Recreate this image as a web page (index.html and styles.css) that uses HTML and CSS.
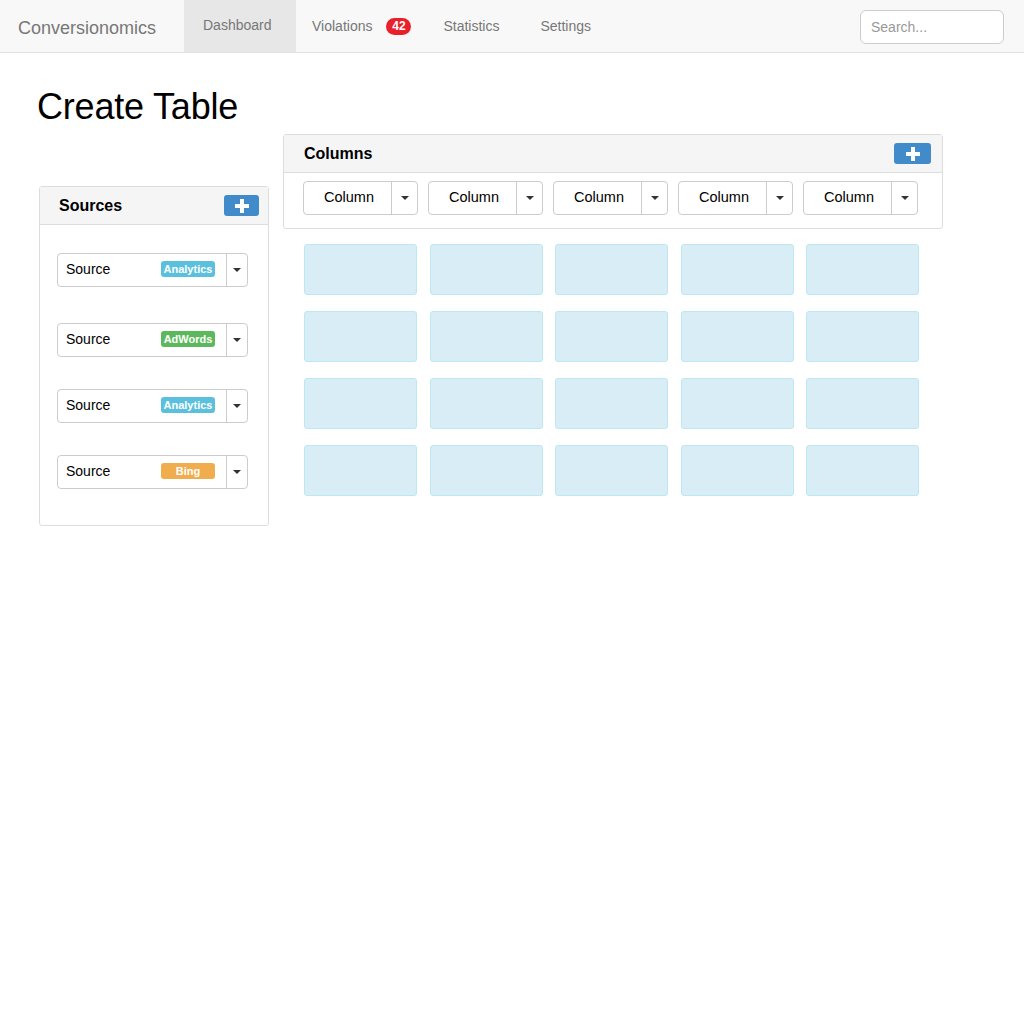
FILE: index.html
```html
<!DOCTYPE html>
<html lang="en">
<head>
  <meta charset="UTF-8" />
  <meta name="viewport" content="width=device-width, initial-scale=1.0"/>
  <title>Create Table - Conversionomics</title>
  <link rel="stylesheet" href="styles.css">
</head>
<body>
  <nav class="navbar">
    <a class="brand" href="#">Conversionomics</a>
    <ul class="nav">
      <li class="active"><a href="#">Dashboard</a></li>
      <li><a href="#">Violations <span class="count">42</span></a></li>
      <li><a href="#">Statistics</a></li>
      <li class="last"><a href="#">Settings</a></li>
    </ul>
    <input type="text" class="search" placeholder="Search..." />
  </nav>

  <div class="page">
    <h1>Create Table</h1>

    <div class="layout">
      <div class="panel sources">
        <div class="panel-heading">
          <span>Sources</span>
          <button class="add-btn"><svg width="16" height="16" viewBox="0 0 16 16"><path d="M6 1h4v5h5v4h-5v5H6v-5H1V6h5z" fill="#fff"/></svg></button>
        </div>
        <div class="panel-body source-list">
          <div class="dropdown source">
            <div class="main">Source <span class="label analytics">Analytics</span></div>
            <div class="caret-btn"><span class="caret"></span></div>
          </div>
          <div class="dropdown source second">
            <div class="main">Source <span class="label adwords">AdWords</span></div>
            <div class="caret-btn"><span class="caret"></span></div>
          </div>
          <div class="dropdown source">
            <div class="main">Source <span class="label analytics">Analytics</span></div>
            <div class="caret-btn"><span class="caret"></span></div>
          </div>
          <div class="dropdown source">
            <div class="main">Source <span class="label bing">Bing</span></div>
            <div class="caret-btn"><span class="caret"></span></div>
          </div>
        </div>
      </div>

      <div class="right">
        <div class="panel columns">
          <div class="panel-heading">
            <span>Columns</span>
            <button class="add-btn wide"><svg width="16" height="16" viewBox="0 0 16 16"><path d="M6 1h4v5h5v4h-5v5H6v-5H1V6h5z" fill="#fff"/></svg></button>
          </div>
          <div class="panel-body column-list">
            <div class="dropdown column"><div class="main">Column</div><div class="caret-btn"><span class="caret"></span></div></div>
            <div class="dropdown column"><div class="main">Column</div><div class="caret-btn"><span class="caret"></span></div></div>
            <div class="dropdown column"><div class="main">Column</div><div class="caret-btn"><span class="caret"></span></div></div>
            <div class="dropdown column"><div class="main">Column</div><div class="caret-btn"><span class="caret"></span></div></div>
            <div class="dropdown column"><div class="main">Column</div><div class="caret-btn"><span class="caret"></span></div></div>
          </div>
        </div>

        <div class="cells">
          <div class="cell"></div><div class="cell"></div><div class="cell"></div><div class="cell"></div><div class="cell"></div>
          <div class="cell"></div><div class="cell"></div><div class="cell"></div><div class="cell"></div><div class="cell"></div>
          <div class="cell"></div><div class="cell"></div><div class="cell"></div><div class="cell"></div><div class="cell"></div>
          <div class="cell"></div><div class="cell"></div><div class="cell"></div><div class="cell"></div><div class="cell"></div>
        </div>
      </div>
    </div>
  </div>
</body>
</html>
```

FILE: styles.css
```css
body {
  margin: 0;
  font-family: "Liberation Sans", Arial, sans-serif;
  font-size: 14px;
  color: #000;
  background: #fff;
}

a {
  text-decoration: none;
}

/* navbar */
.navbar {
  display: flex;
  align-items: stretch;
  height: 52px;
  background: #f8f8f8;
  border-bottom: 1px solid #e0e0e0;
}

.brand {
  display: flex;
  align-items: center;
  width: 166px;
  padding: 4px 0 0 18px;
  font-size: 18px;
  color: #777;
}

.nav {
  display: flex;
  list-style: none;
  margin: 0;
  padding: 0;
}

.nav li a {
  display: flex;
  align-items: center;
  box-sizing: border-box;
  height: 100%;
  padding: 0 16px;
  color: #777;
  font-size: 14px;
}

.nav li.active a {
  width: 112px;
  background: #e7e7e7;
  padding: 0 0 3px 19px;
}

.nav li.last a {
  padding-left: 25px;
}

.count {
  display: inline-block;
  margin-left: 14px;
  width: 25px;
  height: 17px;
  line-height: 17px;
  border-radius: 9px;
  background: #e9202a;
  color: #fff;
  font-size: 12px;
  font-weight: bold;
  text-align: center;
}

.search {
  margin: 10px 20px 0 auto;
  width: 144px;
  height: 34px;
  box-sizing: border-box;
  padding: 0 10px;
  border: 1px solid #ccc;
  border-radius: 6px;
  font-family: inherit;
  font-size: 14px;
  background: #fff;
}

.search::placeholder {
  color: #999;
}

/* page */
.page {
  padding: 0 37px;
}

h1 {
  margin: 34px 0 0;
  font-size: 36px;
  font-weight: normal;
  line-height: 40px;
  letter-spacing: -0.2px;
}

.layout {
  display: flex;
  align-items: flex-start;
}

.panel {
  border: 1px solid #ddd;
  border-radius: 3px;
  background: #fff;
}

.panel-heading {
  display: flex;
  justify-content: space-between;
  align-items: center;
  height: 37px;
  background: #f5f5f5;
  border-bottom: 1px solid #ddd;
  font-size: 16px;
  font-weight: bold;
}

.add-btn {
  display: flex;
  align-items: center;
  justify-content: center;
  width: 35px;
  height: 21px;
  padding: 0;
  border: none;
  border-radius: 3px;
  background: #428bca;
}

.add-btn.wide {
  width: 37px;
}

/* sources */
.sources {
  width: 228px;
  margin: 59px 0 0 2px;
}

.sources .panel-heading {
  padding: 0 9px 0 19px;
}

.source-list {
  display: flex;
  flex-direction: column;
  gap: 32px;
  padding: 28px 20px 36px 17px;
}

.source.second {
  margin-top: 4px;
}

.dropdown {
  display: flex;
  height: 34px;
  box-sizing: border-box;
  border: 1px solid #ccc;
  border-radius: 4px;
  background: #fff;
}

.dropdown .main {
  display: flex;
  align-items: center;
  flex: 1;
  border-right: 1px solid #ccc;
}

.source .main {
  justify-content: space-between;
  padding: 0 11px 2px 8px;
}

.caret-btn {
  display: flex;
  align-items: center;
  justify-content: center;
  width: 20px;
}

.column .caret-btn {
  width: 25px;
}

.caret {
  width: 0;
  height: 0;
  border-top: 4px solid #333;
  border-left: 4px solid transparent;
  border-right: 4px solid transparent;
}

.label {
  width: 54px;
  height: 16px;
  line-height: 16px;
  border-radius: 3px;
  color: #fff;
  font-size: 11px;
  font-weight: bold;
  text-align: center;
}

.analytics {
  background: #5bc0de;
}

.adwords {
  background: #5cb85c;
}

.bing {
  background: #f0ad4e;
}

/* columns */
.right {
  margin: 7px 0 0 14px;
}

.columns {
  width: 658px;
}

.columns .panel-heading {
  padding: 0 11px 0 20px;
}

.column-list {
  display: flex;
  gap: 10px;
  padding: 8px 19px 13px;
}

.column {
  width: 115px;
}

.column .main {
  justify-content: center;
  padding: 0 0 2px 3px;
  font-size: 14.5px;
}

.cells {
  display: grid;
  grid-template-columns: repeat(5, 113px);
  grid-auto-rows: 51px;
  column-gap: 12.5px;
  row-gap: 16px;
  margin: 15px 0 0 21px;
}

.cell {
  background: #d9edf7;
  border: 1px solid #bce8f1;
  border-radius: 3px;
}
```
